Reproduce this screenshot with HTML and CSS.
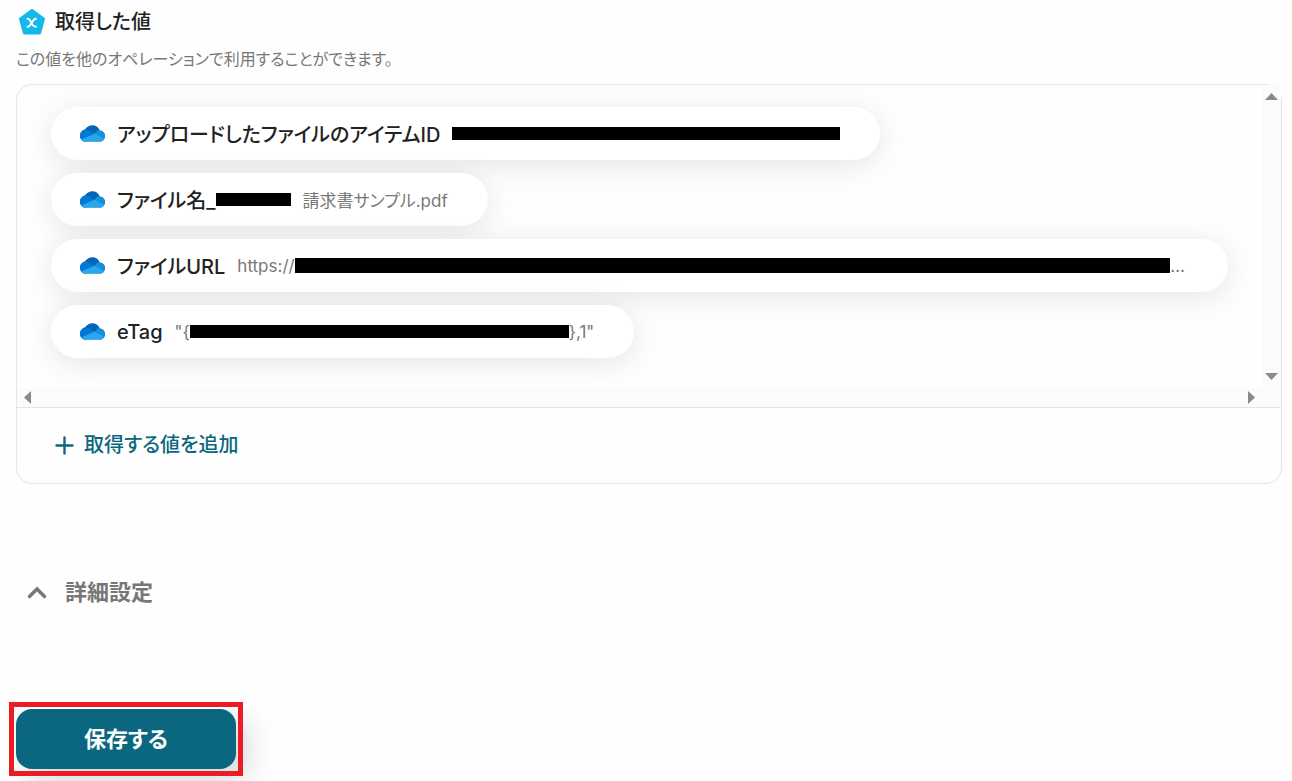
FILE: index.html
```
<!DOCTYPE html>
<html lang="ja">
    <head>
        <meta charset="utf-8">
        <meta name="viewport" content="width=device-width, initial-scale=1">
        <title>取得した値</title>
        <link rel="stylesheet" href="styles.css">
    </head>
    <body>
        <!-- cloud icon, shared by every value -->
        <svg class="defs" width="0" height="0" aria-hidden="true">
            <defs>
                <clipPath id="cloudClip">
                    <path d="M5.500 16.500A5.500 5.500 0 0 1 0 11C0 7.700 2.300 5.200 5 4.600C6.500 1.800 9.300 .200 12.500 .200C16 .200 18.700 2.400 19.600 5.400C22.800 5.500 25 8 25 11A5.400 5.400 0 0 1 19.600 16.500Z"/>
                </clipPath>
                <symbol id="cloud" viewBox="0 0 25 17">
                    <g clip-path="url(#cloudClip)">
                        <rect width="25" height="17" fill="#0364b8"/>
                        <path d="M0 4.500C4 3.500 8 4.500 10 6L16 9.500L6 17H0Z" fill="#0078d4"/>
                        <path d="M15 8.500C16 6 18 5 20 5H25V17H20Z" fill="#1490df"/>
                        <path d="M1 14.500L15 8.500L24.500 14.500V17H1Z" fill="#28a8ea"/>
                    </g>
                </symbol>
            </defs>
        </svg>

        <main class="page">
            <header class="header">
                <svg class="header-icon" width="28" height="28" viewBox="0 0 28 28" aria-hidden="true">
                    <path d="M14 2.500L25.500 11L21.500 25H6.500L2.500 11Z" fill="#14b9ea" stroke="#14b9ea" stroke-width="3" stroke-linejoin="round"/>
                    <path d="M9.500 10.800C13 10 13.500 19.500 18 18.700M18 10.800C14.500 10 13 19.500 9.500 18.700" fill="none" stroke="#fff" stroke-width="1.900" stroke-linecap="round"/>
                </svg>
                <h1 class="title">取得した値</h1>
            </header>
            <p class="lead">この値を他のオペレーションで利用することができます。</p>

            <section class="card">
                <div class="scroller">
                    <ul class="values">
                        <li class="value">
                            <svg class="cloud" width="25" height="17"><use href="#cloud"/></svg>
                            <span class="name">アップロードしたファイルのアイテムID</span>
                            <span class="mask mask-id"></span>
                        </li>
                        <li class="value">
                            <svg class="cloud" width="25" height="17"><use href="#cloud"/></svg>
                            <span class="name masked">ファイル名_<span class="mask mask-name"></span></span>
                            <span class="data">請求書サンプル.pdf</span>
                        </li>
                        <li class="value value-wide">
                            <svg class="cloud" width="25" height="17"><use href="#cloud"/></svg>
                            <span class="name">ファイルURL</span>
                            <span class="data masked">https://<span class="mask mask-url"></span>…</span>
                        </li>
                        <li class="value">
                            <svg class="cloud" width="25" height="17"><use href="#cloud"/></svg>
                            <span class="name">eTag</span>
                            <span class="data masked">"{<span class="mask mask-etag"></span>},1"</span>
                        </li>
                    </ul>
                    <div class="bar bar-y" aria-hidden="true">
                        <svg width="13" height="7" viewBox="0 0 13 7"><path d="M0 7L6.500 0L13 7Z"/></svg>
                        <svg width="13" height="7" viewBox="0 0 13 7"><path d="M0 0L6.500 7L13 0Z"/></svg>
                    </div>
                    <div class="bar bar-x" aria-hidden="true">
                        <svg width="7" height="13" viewBox="0 0 7 13"><path d="M7 0L0 6.500L7 13Z"/></svg>
                        <svg width="7" height="13" viewBox="0 0 7 13"><path d="M0 0L7 6.500L0 13Z"/></svg>
                    </div>
                </div>
                <div class="card-footer">
                    <button type="button" class="add">
                        <svg width="19" height="19" viewBox="0 0 19 19" aria-hidden="true"><path d="M9.500 1.500V17.500M1.500 9.500H17.500" fill="none" stroke="#0b6780" stroke-width="2.400" stroke-linecap="round"/></svg>
                        取得する値を追加
                    </button>
                </div>
            </section>

            <button type="button" class="details" aria-expanded="false">
                <svg width="20" height="13" viewBox="0 0 20 13" aria-hidden="true"><path d="M2.500 10.500L10 3L17.500 10.500" fill="none" stroke="#777" stroke-width="3.400" stroke-linecap="round"/></svg>
                詳細設定
            </button>

            <div class="save-box">
                <button type="button" class="save">保存する</button>
            </div>
        </main>
    </body>
</html>
```

FILE: styles.css
```
/* base */
* {
    box-sizing:         border-box;
}
body {
    margin:             0;
    background-color:   #fefefe;
    color:              #222;
    font-family:        Inter, "Noto Sans CJK JP", sans-serif;
    font-size:          16px;
    font-feature-settings: "palt";
}
button {
    padding:            0;
    border:             0;
    background:         none;
    font:               inherit;
    font-feature-settings: inherit;
    cursor:             pointer;
}
.defs {
    position:           absolute;
}
.page {
    padding:            7px 10px 12px 16px;
}

/* heading */
.header {
    display:            flex;
    align-items:        center;
    gap:                9px;
    padding-left:       2px;
    height:             30px;
}
.title {
    margin:             0;
    font-size:          20px;
    font-weight:        500;
    line-height:        30px;
}
.lead {
    margin:             11px 0 14px;
    color:              #777;
    font-size:          16px;
    line-height:        22px;
}

/* card */
.card {
    border:             1px solid #e5e5e5;
    border-radius:      16px;
}
.scroller {
    display:            grid;
    grid-template-columns: minmax(0, 1fr) 19px;
    grid-template-rows: auto 19px;
    border-bottom:      1px solid #e5e5e5;
}
.values {
    display:            flex;
    flex-direction:     column;
    align-items:        flex-start;
    gap:                13px;
    margin:             0;
    padding:            22px 34px 30px;
    overflow:           hidden;
    list-style:         none;
}
.value {
    display:            flex;
    align-items:        center;
    gap:                12px;
    height:             53px;
    padding:            0 40px 0 29px;
    border-radius:      27px;
    background-color:   #fff;
    box-shadow:         0 5px 30px rgba(0, 0, 0, .1);
    white-space:        nowrap;
}
.value-wide {
    align-self:         stretch;
    padding-right:      43px;
}
.name {
    font-size:          20px;
    font-weight:        500;
}
.data {
    color:              #777;
    font-size:          17px;
}
.masked {
    display:            flex;
    align-items:        center;
}
.value-wide .data {
    flex:               1;
}
.mask {
    height:             13px;
    background-color:   #000;
}
.mask-id {
    width:              388px;
}
.mask-name {
    width:              75px;
}
.mask-url {
    flex:               1;
    height:             15px;
}
.mask-etag {
    width:              379px;
}

/* scroll bars */
.bar {
    display:            flex;
    align-items:        center;
    justify-content:    space-between;
    background-color:   #fbfbfb;
    fill:               #8a8a8a;
}
.bar-y {
    flex-direction:     column;
    padding:            8px 0;
}
.bar-x {
    grid-column:        1 / 3;
    padding:            0 26px 0 7px;
}

.card-footer {
    padding:            22px 38px;
}
.add {
    display:            flex;
    align-items:        center;
    gap:                10px;
    color:              #0b6780;
    font-size:          20px;
    font-weight:        500;
    line-height:        31px;
}

/* below the card */
.details {
    display:            flex;
    align-items:        center;
    gap:                18px;
    margin:             92px 0 101px 11px;
    color:              #777;
    font-size:          22px;
    font-weight:        600;
    line-height:        32px;
}
.save-box {
    position:           relative;
    width:              220px;
}
/* red frame round the save button */
.save-box::after {
    content:            "";
    position:           absolute;
    inset:              -7px;
    border:             5px solid #ed1c24;
    pointer-events:     none;
}
.save {
    display:            block;
    width:              100%;
    border-radius:      16px;
    background-color:   #0b6780;
    box-shadow:         10px 10px 30px rgba(20, 50, 70, .2);
    clip-path:          inset(0 -50px -50px 0);
    color:              #fff;
    font-size:          22px;
    font-weight:        600;
    line-height:        60px;
}
```
